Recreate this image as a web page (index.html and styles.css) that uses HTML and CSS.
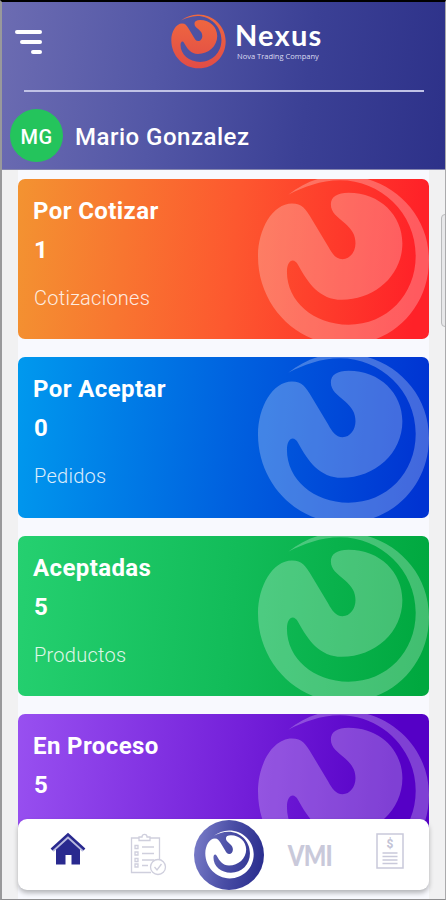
FILE: index.html
```html
<!DOCTYPE html>
<html lang="es">
<head>
    <meta charset="UTF-8">
    <meta name="viewport" content="width=device-width, initial-scale=1.0">
    <title>Nexus - Inicio</title>
    <link rel="stylesheet" href="styles.css">
</head>
<body>
    <!-- Shared shapes -->
    <svg class="defs" width="0" height="0">
        <defs>
            <linearGradient id="orange" x1="0" y1="0" x2="0" y2="1">
                <stop offset="0" stop-color="#f0693f"/>
                <stop offset="1" stop-color="#e14c46"/>
            </linearGradient>
        </defs>
        <symbol id="mark" viewBox="50 14 520 520">
            <path d="M144 76C190 40 245 18 305 18C450 18 567 130 567 272C567 417 455 528 312 528C168 528 53 408 53 262C53 180 97 103 155 103C186 103 197 121 213 147L264 232C276 254 287 270 307 270C330 270 346 247 346 222C346 197 335 181 315 163C291 142 272 130 272 105C272 82 292 70 325 70C420 70 487 138 487 222C487 318 405 392 305 392C238 392 203 341 174 288C160 262 140 274 140 308C140 397 220 467 325 467C440 467 527 378 527 260C527 130 420 33 300 33C240 33 190 54 144 76Z"/>
        </symbol>
    </svg>

    <div class="phone">
        <header class="header">
            <div class="top-bar">
                <div class="menu-btn">
                    <span class="line"></span>
                    <span class="line medium"></span>
                    <span class="line short"></span>
                </div>
                <div class="brand">
                    <svg class="brand-mark" fill="url(#orange)"><use href="#mark"/></svg>
                    <div class="brand-text">
                        <h1>Nexus</h1>
                        <p>Nova Trading Company</p>
                    </div>
                </div>
            </div>
            <div class="divider"></div>
            <div class="user">
                <div class="avatar">MG</div>
                <h2>Mario Gonzalez</h2>
            </div>
        </header>

        <main class="cards">
            <section class="card card-orange">
                <svg class="card-mark"><use href="#mark"/></svg>
                <h3>Por Cotizar</h3>
                <div class="count">1</div>
                <p>Cotizaciones</p>
            </section>
            <section class="card card-blue">
                <svg class="card-mark"><use href="#mark"/></svg>
                <h3>Por Aceptar</h3>
                <div class="count">0</div>
                <p>Pedidos</p>
            </section>
            <section class="card card-green">
                <svg class="card-mark"><use href="#mark"/></svg>
                <h3>Aceptadas</h3>
                <div class="count">5</div>
                <p>Productos</p>
            </section>
            <section class="card card-purple">
                <svg class="card-mark"><use href="#mark"/></svg>
                <h3>En Proceso</h3>
                <div class="count">5</div>
            </section>
        </main>

        <div class="scrollbar"></div>

        <nav class="nav">
            <a class="nav-home">
                <svg width="36" height="34" viewBox="0 0 36 34">
                    <path d="M6 16L18 5.5L30 16V32.5H21.5V23H15.5V32.5H6Z" fill="#29298f"/>
                    <path d="M3 19L18 5.5L33 19" fill="none" stroke="#b9badf" stroke-width="2"/>
                    <path d="M1.5 17.5L18 2.5L34.5 17.5" fill="none" stroke="#29298f" stroke-width="2.6"/>
                </svg>
            </a>
            <a class="nav-orders">
                <svg width="38" height="44" viewBox="0 0 38 44" fill="none" stroke="#cfcfdd" stroke-width="1.3">
                    <path d="M10 5H2.5V39.5H22M21 5H30.5V26"/>
                    <path d="M10 7.5V4H13C13 0.5 18 0.5 18 4H21V7.5Z"/>
                    <path d="M13 14H25M13 20.5H25M13 27H25M13 32.5H19"/>
                    <path d="M6 12.5h3v3h-3zM6 19h3v3h-3zM6 25.500h3v3h-3zM6 31h3v3h-3z"/>
                    <circle cx="29" cy="34" r="7.5" fill="#fff"/>
                    <path d="M25.500 34L28 37L32.500 31"/>
                </svg>
            </a>
            <a class="nav-center">
                <svg fill="#fff"><use href="#mark"/></svg>
            </a>
            <a class="nav-vmi">VMI</a>
            <a class="nav-bill">
                <svg width="28" height="36" viewBox="0 0 28 36" fill="none" stroke="#c9c9da" stroke-width="1.5">
                    <rect x="1" y="1" width="26" height="34"/>
                    <path d="M6.500 20H21.500M6.500 23.500H21.500M6.500 27H21.500M6.500 30.500H21.500"/>
                    <text x="14" y="15" text-anchor="middle" class="bill-sign">$</text>
                </svg>
            </a>
        </nav>
    </div>
</body>
</html>
```
FILE: styles.css
```css
* {
    margin: 0;
    padding: 0;
    box-sizing: border-box;
}

body {
    font-family: Roboto, "Liberation Sans", sans-serif;
    background: #f1f1f2;
    color: white;
}

.defs {
    display: block;
}

.phone {
    position: relative;
    height: 900px;
    overflow: hidden;
    border-top: 2px solid #000;
    border-left: 2px solid #99999b;
    border-right: 1px solid #aaaaac;
    border-bottom: 1px solid #8e8e90;
}

/* Header */
.header {
    height: 168px;
    margin: 0 -1px 0 -2px;
    padding: 12px 22px 0 10px;
    background: linear-gradient(97deg, #6c6cb2 0%, #5357a6 35%, #3b4095 68%, #2d3189 100%);
    border-left: 2px solid #4d4e83;
    border-bottom: 1px solid #8586ae;
}

.top-bar {
    display: flex;
    align-items: flex-start;
    height: 76px;
}

.menu-btn {
    display: flex;
    flex-direction: column;
    align-items: flex-end;
    gap: 6px;
    width: 30px;
    margin-top: 16px;
}

.menu-btn .line {
    width: 27px;
    height: 4px;
    border-radius: 2px;
    background: white;
}

.menu-btn .medium {
    width: 22px;
}

.menu-btn .short {
    width: 11px;
}

.brand {
    display: flex;
    margin-left: 129px;
}

.brand-mark {
    width: 55px;
    height: 55px;
}

.brand-text {
    margin: 4px 0 0 9px;
    font-family: Lato, sans-serif;
}

.brand-text h1 {
    font-size: 29px;
    line-height: 34px;
    letter-spacing: 1.2px;
}

.brand-text p {
    margin-left: 2px;
    font-family: "Open Sans", sans-serif;
    font-size: 7.5px;
    line-height: 9px;
    font-weight: 500;
    color: #dcdcf2;
    white-space: nowrap;
}

.divider {
    height: 2px;
    margin-left: 12px;
    background: #c0c2e6;
}

.user {
    display: flex;
    align-items: center;
    gap: 12px;
    height: 53px;
    margin-top: 17px;
    margin-left: -2px;
}

.avatar {
    width: 53px;
    height: 53px;
    border-radius: 50%;
    background: #24c45c;
    font-size: 20px;
    font-weight: 500;
    line-height: 56px;
    letter-spacing: 0.4px;
    text-align: center;
}

.user h2 {
    font-size: 24px;
    font-weight: 500;
    letter-spacing: 0.5px;
    padding-top: 2px;
}

/* Cards */
.cards {
    display: flex;
    flex-direction: column;
    gap: 18px;
    height: 729px;
    margin: 0 16px;
    padding-top: 9px;
    background: #f8f9fe;
}

.card {
    position: relative;
    flex: none;
    height: 160.3px;
    padding: 17px 15px;
    border-radius: 7px;
    overflow: hidden;
}

.card h3 {
    font-size: 24px;
    line-height: 30px;
    font-weight: 700;
    letter-spacing: 0.4px;
}

.count {
    margin: 9px 0 0 1px;
    font-size: 24px;
    line-height: 30px;
    font-weight: 700;
}

.card p {
    margin: 20px 0 0 1px;
    font-size: 20px;
    line-height: 26px;
    font-weight: 300;
    letter-spacing: 0.25px;
    opacity: 0.85;
}

.card-mark {
    position: absolute;
    top: -5px;
    right: -1px;
    width: 173px;
    height: 173px;
    fill: rgba(255, 255, 255, 0.26);
}

.card-orange {
    background: linear-gradient(95deg, #f39331, #fd582f 52%, #ff2128 96%);
}

.card-blue {
    background: linear-gradient(95deg, #0099ee, #0061df 52%, #0033d2 98%);
}

.card-green {
    background: linear-gradient(95deg, #25d070, #12bc59 52%, #00a83f 98%);
}

.card-purple {
    background: linear-gradient(95deg, #9850f0, #7521da 52%, #5500c6 90%);
}

.card-purple .card-mark {
    fill: rgba(255, 255, 255, 0.25);
}

.scrollbar {
    position: absolute;
    top: 212px;
    right: -4px;
    width: 8px;
    height: 113px;
    border: 1px solid #b9babc;
    border-radius: 4px;
    background: #e7e7e9;
}

/* Bottom navigation */
.nav {
    position: absolute;
    left: 16px;
    right: 16px;
    bottom: 9px;
    height: 71px;
    display: grid;
    grid-template-columns: 99px 61px 102px 60px 1fr;
    align-items: center;
    justify-items: center;
    border-radius: 9px;
    background: white;
    box-shadow: 0 3px 5px rgba(0, 0, 0, 0.28);
}

.nav a {
    display: flex;
}

.nav .nav-home {
    margin-top: -11px;
}

.nav-center {
    width: 70px;
    height: 70px;
    align-items: center;
    justify-content: center;
    border-radius: 50%;
    background: linear-gradient(100deg, #7d80cb, #494da5 50%, #25298b);
}

.nav-center svg {
    width: 49px;
    height: 49px;
}

.nav-vmi {
    color: #c9c9da;
    font-family: Lato, sans-serif;
    font-size: 29px;
    font-weight: 900;
    letter-spacing: -1px;
    transform: scaleX(0.82);
}

.nav-bill {
    margin: -8px 0 0 10px;
}

.bill-sign {
    fill: #c3c3d6;
    stroke: none;
    font-size: 12px;
    font-weight: 700;
}
```
